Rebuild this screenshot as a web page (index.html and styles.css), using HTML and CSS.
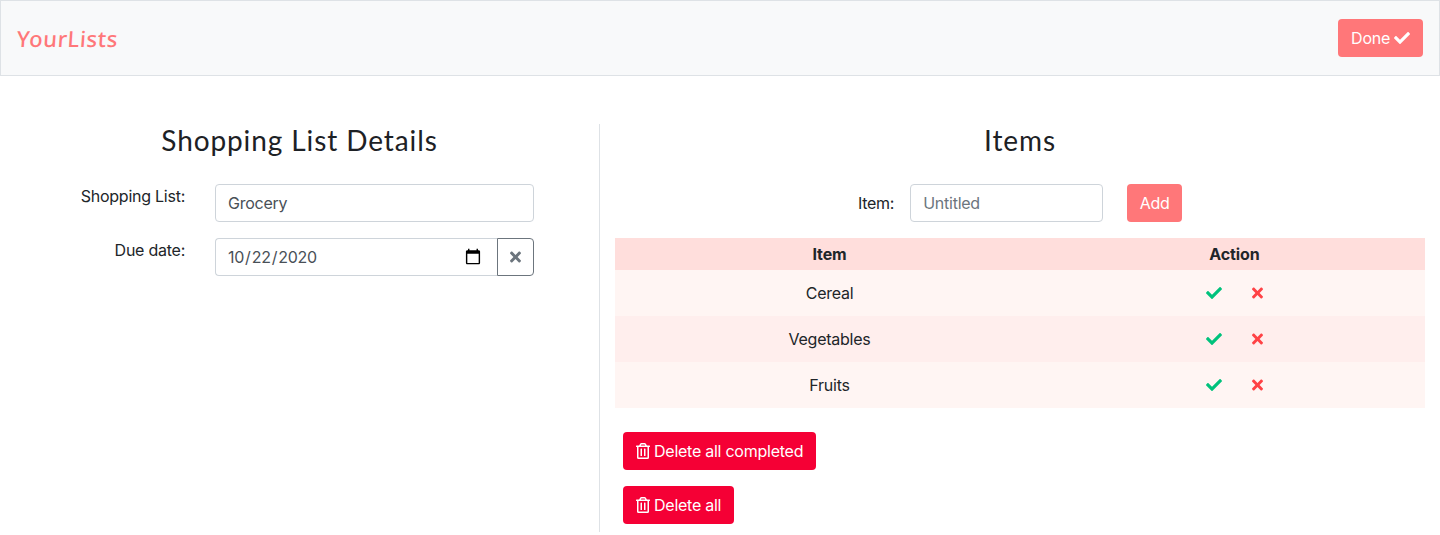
FILE: index.html
```html
<!DOCTYPE html>
<html lang="en">
<head>
    <meta charset="UTF-8">
    <meta name="viewport" content="width=device-width, initial-scale=1.0">
    <title>YourLists</title>
    <link rel="stylesheet" href="styles.css">
</head>
<body>

<nav class="navbar">
    <a class="brand" href="#">YourLists</a>
    <button class="btn btn-coral btn-done">Done
        <svg class="icon icon-done" viewBox="0 0 512 512"><path d="M173.898 439.404l-166.4-166.4c-9.997-9.997-9.997-26.206 0-36.204l36.203-36.204c9.997-9.998 26.207-9.998 36.204 0L192 312.69 432.095 72.596c9.997-9.997 26.207-9.997 36.204 0l36.203 36.204c9.997 9.997 9.997 26.206 0 36.204l-294.4 294.401c-9.998 9.997-26.207 9.997-36.204-.001z"/></svg>
    </button>
</nav>

<main class="content">
    <section class="details">
        <h3 class="title">Shopping List Details</h3>
        <div class="field">
            <label class="field-label" for="listName">Shopping List:</label>
            <input class="input" type="text" id="listName" value="Grocery">
        </div>
        <div class="field">
            <label class="field-label" for="dueDate">Due date:</label>
            <div class="input-group">
                <input class="input input-date" type="date" id="dueDate" value="2020-10-22">
                <button class="btn-clear" aria-label="Clear">
                    <svg class="icon icon-clear" viewBox="0 0 352 512"><path d="M242.72 256l100.07-100.07c12.28-12.28 12.28-32.19 0-44.48l-22.24-22.24c-12.28-12.28-32.19-12.28-44.48 0L176 189.28 75.93 89.21c-12.28-12.28-32.19-12.28-44.48 0L9.21 111.45c-12.28 12.28-12.28 32.19 0 44.48L109.28 256 9.21 356.07c-12.28 12.28-12.28 32.19 0 44.48l22.24 22.24c12.28 12.28 32.2 12.28 44.48 0L176 322.72l100.07 100.07c12.28 12.28 32.2 12.28 44.48 0l22.24-22.24c12.28-12.28 12.28-32.19 0-44.48L242.72 256z"/></svg>
                </button>
            </div>
        </div>
    </section>

    <section class="items">
        <h3 class="title">Items</h3>
        <div class="add-row">
            <label for="newItem">Item:</label>
            <input class="input input-item" type="text" id="newItem" placeholder="Untitled">
            <button class="btn btn-coral btn-add">Add</button>
        </div>

        <table class="items-table">
            <thead>
                <tr><th class="col-item">Item</th><th>Action</th></tr>
            </thead>
            <tbody>
                <tr>
                    <td>Cereal</td>
                    <td>
                        <div class="actions">
                            <svg class="icon icon-check" viewBox="0 0 512 512"><path d="M173.898 439.404l-166.4-166.4c-9.997-9.997-9.997-26.206 0-36.204l36.203-36.204c9.997-9.998 26.207-9.998 36.204 0L192 312.69 432.095 72.596c9.997-9.997 26.207-9.997 36.204 0l36.203 36.204c9.997 9.997 9.997 26.206 0 36.204l-294.4 294.401c-9.998 9.997-26.207 9.997-36.204-.001z"/></svg>
                            <svg class="icon icon-times" viewBox="0 0 352 512"><path d="M242.72 256l100.07-100.07c12.28-12.28 12.28-32.19 0-44.48l-22.24-22.24c-12.28-12.28-32.19-12.28-44.48 0L176 189.28 75.93 89.21c-12.28-12.28-32.19-12.28-44.48 0L9.21 111.45c-12.28 12.28-12.28 32.19 0 44.48L109.28 256 9.21 356.07c-12.28 12.28-12.28 32.19 0 44.48l22.24 22.24c12.28 12.28 32.2 12.28 44.48 0L176 322.72l100.07 100.07c12.28 12.28 32.2 12.28 44.48 0l22.24-22.24c12.28-12.28 12.28-32.19 0-44.48L242.72 256z"/></svg>
                        </div>
                    </td>
                </tr>
                <tr>
                    <td>Vegetables</td>
                    <td>
                        <div class="actions">
                            <svg class="icon icon-check" viewBox="0 0 512 512"><path d="M173.898 439.404l-166.4-166.4c-9.997-9.997-9.997-26.206 0-36.204l36.203-36.204c9.997-9.998 26.207-9.998 36.204 0L192 312.69 432.095 72.596c9.997-9.997 26.207-9.997 36.204 0l36.203 36.204c9.997 9.997 9.997 26.206 0 36.204l-294.4 294.401c-9.998 9.997-26.207 9.997-36.204-.001z"/></svg>
                            <svg class="icon icon-times" viewBox="0 0 352 512"><path d="M242.72 256l100.07-100.07c12.28-12.28 12.28-32.19 0-44.48l-22.24-22.24c-12.28-12.28-32.19-12.28-44.48 0L176 189.28 75.93 89.21c-12.28-12.28-32.19-12.28-44.48 0L9.21 111.45c-12.28 12.28-12.28 32.19 0 44.48L109.28 256 9.21 356.07c-12.28 12.28-12.28 32.19 0 44.48l22.24 22.24c12.28 12.28 32.2 12.28 44.48 0L176 322.72l100.07 100.07c12.28 12.28 32.2 12.28 44.48 0l22.24-22.24c12.28-12.28 12.28-32.19 0-44.48L242.72 256z"/></svg>
                        </div>
                    </td>
                </tr>
                <tr>
                    <td>Fruits</td>
                    <td>
                        <div class="actions">
                            <svg class="icon icon-check" viewBox="0 0 512 512"><path d="M173.898 439.404l-166.4-166.4c-9.997-9.997-9.997-26.206 0-36.204l36.203-36.204c9.997-9.998 26.207-9.998 36.204 0L192 312.69 432.095 72.596c9.997-9.997 26.207-9.997 36.204 0l36.203 36.204c9.997 9.997 9.997 26.206 0 36.204l-294.4 294.401c-9.998 9.997-26.207 9.997-36.204-.001z"/></svg>
                            <svg class="icon icon-times" viewBox="0 0 352 512"><path d="M242.72 256l100.07-100.07c12.28-12.28 12.28-32.19 0-44.48l-22.24-22.24c-12.28-12.28-32.19-12.28-44.48 0L176 189.28 75.93 89.21c-12.28-12.28-32.19-12.28-44.48 0L9.21 111.45c-12.28 12.28-12.28 32.19 0 44.48L109.28 256 9.21 356.07c-12.28 12.28-12.28 32.19 0 44.48l22.24 22.24c12.28 12.28 32.2 12.28 44.48 0L176 322.72l100.07 100.07c12.28 12.28 32.2 12.28 44.48 0l22.24-22.24c12.28-12.28 12.28-32.19 0-44.48L242.72 256z"/></svg>
                        </div>
                    </td>
                </tr>
            </tbody>
        </table>

        <div class="delete-buttons">
            <button class="btn btn-red">
                <svg class="icon icon-trash" viewBox="0 0 448 512"><path d="M268 416h24a12 12 0 0 0 12-12V188a12 12 0 0 0-12-12h-24a12 12 0 0 0-12 12v216a12 12 0 0 0 12 12zM432 80h-82.41l-34-56.7A48 48 0 0 0 274.41 0H173.59a48 48 0 0 0-41.16 23.3L98.41 80H16A16 16 0 0 0 0 96v16a16 16 0 0 0 16 16h16v336a48 48 0 0 0 48 48h288a48 48 0 0 0 48-48V128h16a16 16 0 0 0 16-16V96a16 16 0 0 0-16-16zM171.84 50.91A6 6 0 0 1 177 48h94a6 6 0 0 1 5.15 2.91L293.61 80H154.39zM368 464H80V128h288zm-212-48h24a12 12 0 0 0 12-12V188a12 12 0 0 0-12-12h-24a12 12 0 0 0-12 12v216a12 12 0 0 0 12 12z"/></svg>
                Delete all completed
            </button>
            <button class="btn btn-red">
                <svg class="icon icon-trash" viewBox="0 0 448 512"><path d="M268 416h24a12 12 0 0 0 12-12V188a12 12 0 0 0-12-12h-24a12 12 0 0 0-12 12v216a12 12 0 0 0 12 12zM432 80h-82.41l-34-56.7A48 48 0 0 0 274.41 0H173.59a48 48 0 0 0-41.16 23.3L98.41 80H16A16 16 0 0 0 0 96v16a16 16 0 0 0 16 16h16v336a48 48 0 0 0 48 48h288a48 48 0 0 0 48-48V128h16a16 16 0 0 0 16-16V96a16 16 0 0 0-16-16zM171.84 50.91A6 6 0 0 1 177 48h94a6 6 0 0 1 5.15 2.91L293.61 80H154.39zM368 464H80V128h288zm-212-48h24a12 12 0 0 0 12-12V188a12 12 0 0 0-12-12h-24a12 12 0 0 0-12 12v216a12 12 0 0 0 12 12z"/></svg>
                Delete all
            </button>
        </div>
    </section>
</main>

</body>
</html>
```

FILE: styles.css
```css
* {
    box-sizing: border-box;
}
body {
    margin: 0;
    font-family: Inter, "Liberation Sans", sans-serif;
    font-size: 16px;
    line-height: 24px;
    letter-spacing: -0.25px;
    color: #212529;
    background-color: #fff;
}
.navbar {
    display: flex;
    align-items: center;
    justify-content: space-between;
    height: 76px;
    padding: 0 16px;
    background-color: #f8f9fa;
    border: 1px solid #dee2e6;
}
.brand {
    font-family: "Noto Sans", sans-serif;
    font-size: 22px;
    font-weight: 500;
    letter-spacing: 0.6px;
    color: #ff7779;
    text-decoration: none;
    transform: skewX(-4deg);
}
.icon {
    fill: currentColor;
    display: block;
    flex: none;
}
.btn {
    display: inline-flex;
    align-items: center;
    height: 38px;
    padding: 0 13px;
    font: inherit;
    letter-spacing: inherit;
    color: #fff;
    border: none;
    border-radius: 4px;
    cursor: pointer;
}
.btn-coral {
    background-color: #ff7779;
}
.btn-red {
    background-color: #f50035;
    gap: 4px;
}
.btn-done {
    gap: 4px;
}
.btn-add {
    padding: 0 12.5px;
}
.icon-done {
    width: 16px;
    height: 16px;
}
.content {
    display: flex;
    margin-top: 48px;
}
.details {
    width: 600px;
    height: 408px;
    padding: 0 65px 0 0;
    border-right: 1px solid #dee2e6;
}
.title {
    margin: 0 0 27px;
    font-family: Lato, sans-serif;
    font-size: 28px;
    font-weight: 400;
    line-height: 33px;
    letter-spacing: 0.9px;
    text-align: center;
    color: #1d2125;
}
.details .title {
    margin-right: -65px;
}
.field {
    display: flex;
    margin-bottom: 16px;
}
.field-label {
    width: 185px;
    margin-right: 30px;
    text-align: right;
}
.input {
    width: 319px;
    height: 38px;
    padding: 0 12px;
    font: inherit;
    letter-spacing: inherit;
    color: #495057;
    background-color: #fff;
    border: 1px solid #ced4da;
    border-radius: 4px;
}
.input::placeholder {
    color: #6c757d;
}
.input-group {
    display: flex;
    width: 319px;
}
.input-date {
    width: 283px;
    border-radius: 4px 0 0 4px;
    border-right: none;
}
.input-date::-webkit-datetime-edit {
    margin-left: -1px;
}
.input-date::-webkit-calendar-picker-indicator {
    width: 18px;
    height: 18px;
    margin-right: 3px;
    padding: 0;
}
.btn-clear {
    display: flex;
    align-items: center;
    justify-content: center;
    width: 37px;
    height: 38px;
    padding: 0;
    color: #6c757d;
    background: #fff;
    border: 1px solid #6c757d;
    border-radius: 0 4px 4px 0;
}
.icon-clear {
    width: 11px;
    height: 16px;
}
.items {
    width: 840px;
    padding: 0 15px;
}
.add-row {
    display: flex;
    align-items: center;
    justify-content: center;
    margin-bottom: 16px;
}
.input-item {
    width: 193px;
    margin: 0 24px 0 16px;
}
.items-table {
    width: 810px;
    border-collapse: collapse;
}
.items-table th {
    height: 32px;
    padding: 0;
    font-weight: 700;
    letter-spacing: -0.1px;
    background-color: #ffdedc;
}
.col-item {
    width: 429px;
}
.items-table td {
    height: 46px;
    padding: 0;
    text-align: center;
    background-color: #fff5f3;
}
.items-table tbody tr:nth-child(even) td {
    background-color: #ffeeed;
}
.actions {
    display: flex;
    justify-content: center;
    align-items: center;
    gap: 30px;
}
.icon-check {
    width: 16px;
    height: 16px;
    color: #00c27c;
}
.icon-times {
    width: 11px;
    height: 16px;
    color: #ff4245;
}
.delete-buttons {
    display: flex;
    flex-direction: column;
    align-items: flex-start;
    gap: 16px;
    margin: 24px 0 0 8px;
}
.icon-trash {
    width: 14px;
    height: 16px;
}
```
